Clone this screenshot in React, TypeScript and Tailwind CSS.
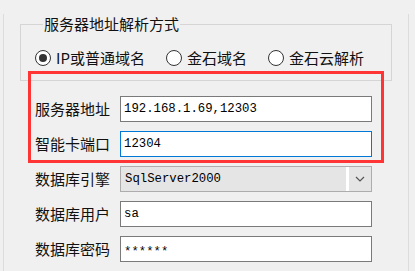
import React from 'react';

const cjk = "font-['Noto_Sans_CJK_SC','Noto_Sans',sans-serif]";
const mono = "font-['Liberation_Mono','Noto_Sans_CJK_SC',monospace]";

function Radio({ label, checked }: { label: string; checked?: boolean }) {
  return (
    <div className="flex items-center gap-[5px]">
      <div className="w-[16px] h-[16px] rounded-full border border-[#333333] bg-white flex items-center justify-center">
        {checked && <div className="w-[8px] h-[8px] rounded-full bg-[#333333]" />}
      </div>
      <span className="text-[15px] leading-[20px] text-[#111111]">{label}</span>
    </div>
  );
}

function Field({ label, children }: { label: string; children: React.ReactNode }) {
  return (
    <div className="flex items-center h-[26px]">
      <span className="w-[85px] text-[15px] leading-[20px] text-[#111111]">{label}</span>
      {children}
    </div>
  );
}

function TextBox({ value, focused }: { value: React.ReactNode; focused?: boolean }) {
  return (
    <div
      className={
        focused
          ? `w-[252px] h-[26px] bg-white border border-[#0078d7] flex items-center pl-[3px] text-[12.3px] text-black ${mono}`
          : `w-[252px] h-[26px] bg-white border border-[#7a7a7a] flex items-center pl-[3px] text-[12.3px] text-black ${mono}`
      }
    >
      {value}
    </div>
  );
}

export default function App() {
  return (
    <div className={`relative w-[415px] h-[271px] bg-[#f0f0f0] overflow-hidden ${cjk}`}>
      <div className="ml-[3px] w-[406px] h-full border-x border-[#dcdcdc]">
        <fieldset className="ml-[16px] mt-[14px] w-[372px] border border-[#d5d5d5] pl-[14px] pt-[14px] pb-[12px]">
          <legend className="ml-[8px] px-[1px] text-[15px] leading-[20px] text-[#111111]">服务器地址解析方式</legend>
          <div className="flex items-center gap-[21px] h-[20px]">
            <Radio label="IP或普通域名" checked />
            <Radio label="金石域名" />
            <Radio label="金石云解析" />
          </div>
        </fieldset>

        <div className="mt-[15px] pl-[31px] flex flex-col gap-[9px]">
          <Field label="服务器地址">
            <TextBox value="192.168.1.69,12303" />
          </Field>
          <Field label="智能卡端口">
            <TextBox value="12304" focused />
          </Field>
          <Field label="数据库引擎">
            <div className="w-[252px] h-[26px] bg-[#e5e5e5] border border-[#adadad] flex items-stretch">
              <div className={`flex-1 flex items-center pl-[4px] text-[12.3px] text-black ${mono}`}>SqlServer2000</div>
              <div className="w-[3px] bg-white" />
              <div className="w-[22px] flex items-center justify-center">
                <svg width="10" height="6" viewBox="0 0 10 6" fill="none">
                  <path d="M1 1 L5 5 L9 1" stroke="#555555" strokeWidth="1.2" />
                </svg>
              </div>
            </div>
          </Field>
          <Field label="数据库用户">
            <TextBox value="sa" />
          </Field>
          <Field label="数据库密码">
            <TextBox value={<span className="inline-block translate-y-[3px]">******</span>} />
          </Field>
        </div>
      </div>

      {/* annotation box */}
      <div className="absolute left-[28px] top-[71px] w-[356px] h-[92px] border-[3px] border-[#ff3535]" />
    </div>
  );
}
